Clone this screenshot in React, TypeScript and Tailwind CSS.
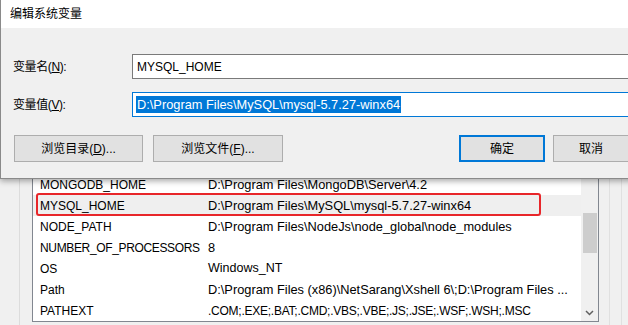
import React from 'react';

const font = { fontFamily: '"Liberation Sans", "Noto Sans CJK SC", sans-serif' };

const rows: [string, string, string][] = [
  ['JAVA_HOME', 'C:\\Program Files\\Java\\jdk1.8.0_221', 'text-[12.8px]'],
  ['MONGODB_HOME', 'D:\\Program Files\\MongoDB\\Server\\4.2', 'text-[12.8px]'],
  ['MYSQL_HOME', 'D:\\Program Files\\MySQL\\mysql-5.7.27-winx64', 'text-[12.8px]'],
  ['NODE_PATH', 'D:\\Program Files\\NodeJs\\node_global\\node_modules', 'text-[12.8px]'],
  ['NUMBER_OF_PROCESSORS', '8', 'text-[12.8px]'],
  ['OS', 'Windows_NT', 'text-[12.5px]'],
  ['Path', 'D:\\Program Files (x86)\\NetSarang\\Xshell 6\\;D:\\Program Files ...', 'text-[12.8px]'],
  ['PATHEXT', '.COM;.EXE;.BAT;.CMD;.VBS;.VBE;.JS;.JSE;.WSF;.WSH;.MSC', 'text-[12px] tracking-[-0.25px]'],
];

const Btn: React.FC<{ w: string; primary?: boolean; children: React.ReactNode }> = ({ w, primary, children }) => (
  <div
    className={`${w} h-[27px] flex items-center justify-center bg-[#e1e1e1] text-[12px] text-black ${
      primary ? 'border-2 border-[#0078d7]' : 'border border-[#adadad]'
    }`}
  >
    {children}
  </div>
);

export default function App() {
  return (
    <div className="relative w-[628px] h-[325px] overflow-hidden bg-[#f0f0f0]" style={font}>
      {/* background window: system variables list */}
      <div className="flex h-full">
        <div className="w-[20px] border-r border-[#dcdcdc]" />
        <div className="w-[12px]" />
        <div className="w-[567px] mt-[130px] h-[192px] border border-[#828790] bg-white flex">
          <div className="flex-1 flex flex-col justify-end overflow-hidden">
            {rows.map(([name, value, size]) => (
              <div
                key={name}
                className={`h-[21px] shrink-0 flex items-center text-black whitespace-nowrap ${
                  name === 'MYSQL_HOME' ? 'bg-[#efefef]' : ''
                }`}
              >
                <span
                  className={`w-[175px] pl-[7px] shrink-0 text-[12px] ${
                    name.length > 16 ? 'tracking-[-0.35px]' : ''
                  }`}
                >
                  {name}
                </span>
                <span className={size}>{value}</span>
              </div>
            ))}
          </div>
          <div className="w-[17px] bg-[#f0f0f0] flex flex-col items-center">
            <div className="mt-[82px] w-[14px] h-[40px] bg-[#cdcdcd]" />
            <div className="mt-auto h-[17px] flex items-center justify-center">
              <svg width="9" height="6" viewBox="0 0 9 6">
                <path d="M1 1l3.5 3.5L8 1" fill="none" stroke="#606060" strokeWidth="1.5" />
              </svg>
            </div>
          </div>
        </div>
        <div className="w-[11px] border-r border-[#e0e0e0]" />
        <div className="w-[12px] border-r border-[#e0e0e0]" />
      </div>

      {/* red annotation */}
      <div className="absolute left-[36px] top-[193px] w-[505px] h-[23px] border-2 border-[#e8262a] rounded-[3px]" />

      {/* edit dialog */}
      <div className="absolute left-0 top-0 w-[640px] h-[179px] border-l border-b border-[#8a8a8a] bg-[#f0f0f0] shadow-[0_2px_6px_rgba(0,0,0,0.35)] flex flex-col">
        <div className="h-[28px] bg-white flex items-center pl-[9px] text-[12px] text-black">编辑系统变量</div>
        <div className="flex flex-col pt-[26px]">
          <div className="flex items-center h-[25px]">
            <span className="w-[131px] pl-[12px] text-[12px] tracking-[-0.4px] text-black">
              变量名(<span className="underline">N</span>):
            </span>
            <div className="flex-1 h-[25px] border border-[#7a7a7a] bg-white flex items-center pl-[4px] text-[12px] text-black">
              MYSQL_HOME
            </div>
          </div>
          <div className="flex items-center h-[25px] mt-[13px]">
            <span className="w-[131px] pl-[12px] text-[12px] tracking-[-0.4px] text-black">
              变量值(<span className="underline">V</span>):
            </span>
            <div className="flex-1 h-[25px] border border-[#0078d7] bg-white flex items-center pl-[3px] text-[12.8px]">
              <span className="bg-[#0078d7] text-white px-[1px] leading-[17px]">
                D:\Program Files\MySQL\mysql-5.7.27-winx64
              </span>
            </div>
          </div>
          <div className="flex items-center mt-[18px] pl-[13px]">
            <Btn w="w-[129px]">
              浏览目录(<span className="underline">D</span>)...
            </Btn>
            <div className="w-[10px]" />
            <Btn w="w-[130px]">
              浏览文件(<span className="underline">F</span>)...
            </Btn>
            <div className="w-[176px]" />
            <Btn w="w-[86px]" primary>
              确定
            </Btn>
            <div className="w-[8px]" />
            <Btn w="w-[76px]">取消</Btn>
          </div>
        </div>
      </div>
    </div>
  );
}
